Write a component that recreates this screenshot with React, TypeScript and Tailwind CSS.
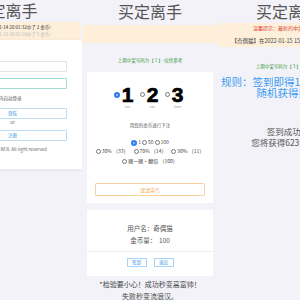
import React from "react";

const cjk = "font-['Noto_Sans_CJK_SC','Noto_Sans',sans-serif]";

export default function App() {
  return (
    <div className={`flex h-[300px] w-[300px] overflow-hidden bg-[#f2f2f8] ${cjk}`}>
      <LoginColumn />
      <BetColumn />
      <RuleColumn />
    </div>
  );
}

function Title({ className = "" }: { className?: string }) {
  return (
    <h1 className={`text-center text-[16px] leading-[16px] text-[#555] ${className}`}>
      买定离手
    </h1>
  );
}

function Radio({ checked = false }: { checked?: boolean }) {
  return checked ? (
    <span className="mr-[1px] inline-flex h-[6px] w-[6px] items-center justify-center rounded-full bg-[#2f7fef] align-middle">
      <span className="h-[2px] w-[2px] rounded-full bg-[#9cc4ff]" />
    </span>
  ) : (
    <span className="mr-[1px] inline-block h-[5px] w-[5px] rounded-full border-[0.8px] border-[#777] bg-white align-middle" />
  );
}

function LoginColumn() {
  return (
    <div className="flex w-[82px] shrink-0 justify-end overflow-hidden">
      <div className="w-[153px] shrink-0">
        <Title className="mt-[2px]" />
        <div className="mr-[2px] mt-[4px] h-[18px] bg-[#fdefd9] pt-[2px] text-center">
          <p className="text-[4.5px] leading-[7px] text-[#333]">
            【奇偶猫】在2022-01-14 20:01:32中了 2 金币!
          </p>
          <p className="text-[4.5px] leading-[7px] text-[#bbb]">
            【奇偶猫】在2022-01-13 18:42:10中了 5 金币!
          </p>
        </div>
        <div className="bg-white pb-[17px] pl-[29px] pr-[15px] pt-[21px] shadow-[0_1px_4px_rgba(0,0,0,0.08)]">
          <div className="h-[11px] rounded-[1px] border border-[#e4e4e4]" />
          <div className="mt-[6px] h-[11px] rounded-[1px] border border-[#9fe0d6]" />
          <p className="mt-[6px] pl-[34px] text-[4.5px] leading-[6px] text-[#555]">
            5天内自动登录
          </p>
          <button className="mt-[7px] flex h-[11px] w-full items-center justify-center rounded-[1px] border border-[#bfdcf5] text-[4.5px] text-[#3b95e6]">
            登陆
          </button>
          <p className="mt-[1px] text-center text-[4.5px] leading-[5px] text-[#666]">or</p>
          <button className="mt-[5px] flex h-[11px] w-full items-center justify-center rounded-[1px] border border-[#bfdcf5] text-[4.5px] text-[#3b95e6]">
            注册
          </button>
          <p className="mt-[5px] text-center text-[4.5px] leading-[6px] text-[#666]">
            © 2021 ITCKER. All right reserved
          </p>
        </div>
      </div>
    </div>
  );
}

function BetColumn() {
  const digits = [
    { n: "1", label: "one", on: true },
    { n: "2", label: "two", on: false },
    { n: "3", label: "three", on: false },
  ];
  return (
    <div className="w-[136px] shrink-0">
      <Title className="mt-[3px]" />
      <div className="mt-[6px] h-[18px] bg-[#fdefd9]" />
      <p className="mt-[14px] text-center text-[4.5px] leading-[6px] text-[#3c9a3c]">
        上期中奖号码为【 1 】-仅供参考
      </p>

      <div className="mx-[5px] mt-[9px] bg-white px-[8px] pb-[7px] pt-[12px]">
        <div className="flex justify-center gap-[6px] pr-[3px] leading-none">
          {digits.map((d) => (
            <div key={d.n} className="flex items-start">
              <span className="mr-[1px] mt-[8px] flex">
                <Radio checked={d.on} />
              </span>
              <div className="flex w-[12px] flex-col items-center">
                <span className="font-['Liberation_Sans',sans-serif] text-[21px] font-bold leading-[21px] text-black [-webkit-text-stroke:0.7px_black]">
                  {d.n}
                </span>
                <span className="mt-[1px] text-[3px] leading-[3px] text-[#999]">{d.label}</span>
              </div>
            </div>
          ))}
        </div>

        <p className="mt-[13px] text-center text-[4.5px] leading-[6px] text-[#555]">
          用您的金币进行下注
        </p>
        <div className="mt-[11px] flex justify-center gap-[1px] text-[5px] leading-[6px] text-[#444]">
          <span><Radio checked />1</span>
          <span><Radio />50</span>
          <span><Radio />100</span>
        </div>
        <div className="mt-[2px] flex justify-center gap-[5px] text-[5px] leading-[6px] text-[#444]">
          <span><Radio />30% （33）</span>
          <span><Radio />70% （14）</span>
          <span><Radio />90% （11）</span>
        </div>
        <div className="mt-[4px] flex justify-center text-[5px] leading-[6px] text-[#444]">
          <span><Radio />赌一赌·翻倍 （100）</span>
        </div>

        <button className="mt-[19px] flex h-[13px] w-full items-center justify-center rounded-[1px] border border-[#fbd29f] text-[5px] text-[#f4a447]">
          试试手气
        </button>
      </div>

      <div className="mx-[5px] mt-[7px] bg-white pb-[9px] pt-[14px] text-center text-[6.5px] leading-[8px] text-[#555]">
        <p>用户名：奇偶猫</p>
        <p className="mt-[4px]">金币量：&nbsp;&nbsp;100</p>
        <div className="mt-[7px] flex justify-center gap-[7px] border-t border-[#eee] pt-[6px]">
          <button className="flex h-[9px] w-[20px] items-center justify-center border border-[#a9d3f5] text-[4.5px] text-[#3b95e6]">
            签到
          </button>
          <button className="flex h-[9px] w-[20px] items-center justify-center border border-[#a9d3f5] text-[4.5px] text-[#3b95e6]">
            退出
          </button>
        </div>
      </div>

      <p className="mt-[4px] whitespace-nowrap text-center text-[7px] leading-[8px] text-[#444]">
        *检验要小心！成功秒变高富帅！
      </p>
      <p className="mt-[4px] text-center text-[7px] leading-[8px] text-[#444]">失败秒变流浪汉。</p>
    </div>
  );
}

function RuleColumn() {
  return (
    <div className="w-[82px] shrink-0 overflow-hidden">
      <div className="w-[140px]">
        <Title className="mt-[3px]" />
        <div className="mt-[4px] h-[24px] bg-[#fdefd9] pt-[2px] text-center">
          <p className="text-[5px] leading-[6px] text-[#e0463a]">温馨提示：最新的中奖信息如下</p>
          <p className="mt-[7px] whitespace-nowrap text-[5.5px] leading-[6px] text-[#444]">
            【奇偶猫】在2022-01-15 15:52:18中了 3 金币!
          </p>
        </div>
        <p className="mt-[16px] text-center text-[4.5px] leading-[6px] text-[#3c9a3c]">
          上期中奖号码为【 3 】-仅供参考
        </p>
        <p className="mt-[7px] whitespace-nowrap text-center text-[10.5px] leading-[11px] text-[#3a9bf0]">
          规则：签到即得1~100金币，
        </p>
        <p className="text-center text-[10.5px] leading-[11px] text-[#3a9bf0]">随机获得奖励</p>
        <p className="mt-[28px] text-center text-[8.5px] leading-[11px] text-[#555]">签到成功！</p>
        <p className="whitespace-nowrap text-center text-[8.5px] leading-[11px] text-[#555]">
          您将获得623金币！
        </p>
      </div>
    </div>
  );
}
